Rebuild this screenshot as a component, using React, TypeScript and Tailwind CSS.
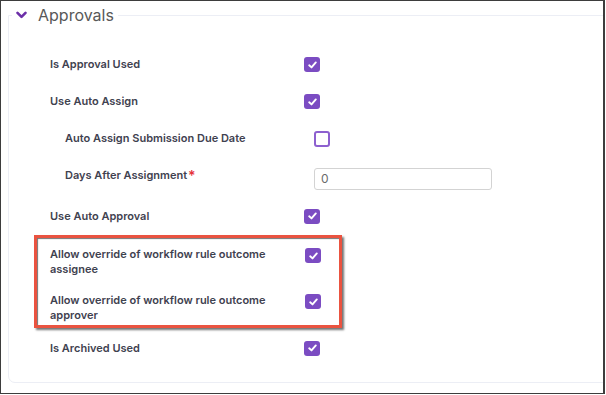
import React from 'react';

function Check({ checked }: { checked: boolean }) {
  if (!checked) {
    return <div className="h-[16px] w-[16px] rounded-[3px] border-2 border-[#8d60cf] bg-white" />;
  }
  return (
    <div className="flex h-[15px] w-[16px] items-center justify-center rounded-[3px] bg-[#7b4cc2]">
      <svg width="9" height="8" viewBox="0 0 9 8" fill="none">
        <path d="M1.2 4.3 L3.5 6.4 L7.8 1.4" stroke="white" strokeWidth="1.9" strokeLinecap="round" strokeLinejoin="round" />
      </svg>
    </div>
  );
}

function Row({ label, checked, indent, h }: { label: React.ReactNode; checked: boolean; indent?: boolean; h: string }) {
  return (
    <div className={`flex items-center ${h} ${indent ? 'pl-[31px]' : 'pl-[16px]'}`}>
      <div className={indent ? 'w-[249px]' : 'w-[254px]'}>{label}</div>
      <Check checked={checked} />
    </div>
  );
}

export default function App() {
  return (
    <div
      className="h-[394px] w-[605px] overflow-hidden border border-r-2 border-[#3d3d3d] bg-white"
      style={{ fontFamily: 'Inter, "Noto Sans", sans-serif' }}
    >
      <fieldset className="ml-[7px] mt-[4px] h-[378px] w-[620px] rounded-bl-[7px] border border-[#eceef5]">
        <legend className="ml-[3px] flex h-[20px] items-center px-[4px]">
          <svg width="11" height="8" viewBox="0 0 11 8" className="mr-[11px]">
            <polyline points="1.5,1.8 5.5,5.8 9.5,1.8" fill="none" stroke="#6c2fa8" strokeWidth="2.6" strokeLinecap="round" strokeLinejoin="round" />
          </svg>
          <span className="text-[16px] leading-[20px] text-[#585858]">Approvals</span>
        </legend>

        <div className="pl-[25px] pt-[21px] text-[11px] font-semibold text-[#3f4250]">
          <Row h="h-[37px]" label="Is Approval Used" checked />
          <Row h="h-[37px]" label="Use Auto Assign" checked />
          <Row h="h-[37px]" indent label="Auto Assign Submission Due Date" checked={false} />
          <div className="flex h-[43px] items-center pl-[31px]">
            <div className="w-[249px] pb-[7px]">
              Days After Assignment
              <span className="ml-[1px] align-[-2px] text-[14px] leading-none text-[#e5333a]">*</span>
            </div>
            <div className="flex h-[22px] w-[178px] items-center rounded-[3px] border border-[#d3d3d3] pl-[6px] text-[12px] font-normal text-[#6b6b6b]">
              0
            </div>
          </div>
          <Row h="h-[32px]" label="Use Auto Approval" checked />

          <div className="mt-[3px] w-[308px] border-[3px] border-[#ea5340] pb-[2px] pl-[13px] pt-[9px] shadow-[2px_2px_2px_rgba(0,0,0,0.55),inset_1px_1px_1px_rgba(0,0,0,0.55)]">
            <div className="flex items-start">
              <div className="w-[255px] leading-[15px]">
                Allow override of workflow rule outcome
                <br />
                assignee
              </div>
              <div className="pt-[1px]">
                <Check checked />
              </div>
            </div>
            <div className="mt-[16px] flex items-start">
              <div className="w-[255px] leading-[15px]">
                Allow override of workflow rule outcome
                <br />
                approver
              </div>
              <div className="pt-[1px]">
                <Check checked />
              </div>
            </div>
          </div>

          <div className="mt-[5px]">
            <Row h="h-[30px]" label="Is Archived Used" checked />
          </div>
        </div>
      </fieldset>
    </div>
  );
}
